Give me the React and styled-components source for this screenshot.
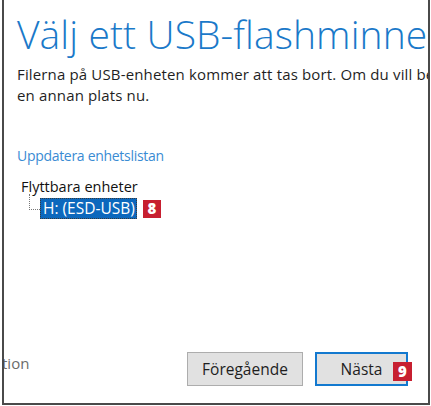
import React from "react";
import styled, { createGlobalStyle } from "styled-components";

const Global = createGlobalStyle`
  html, body { margin: 0; padding: 0; background: #ffffff; }
  body { font-family: "Open Sans", "Noto Sans", sans-serif; }
  * { box-sizing: border-box; }
`;

const Frame = styled.div`
  margin-left: 2px;
  width: 428px;
  height: 405px;
  border-left: 2px solid #4a4a4a;
  border-right: 2px solid #4a4a4a;
  border-bottom: 2px solid #4a4a4a;
  background: #ffffff;
  overflow: hidden;
  display: flex;
  flex-direction: column;
`;

const Content = styled.div`
  padding: 0 0 0 13px;
  display: flex;
  flex-direction: column;
  flex: 1;
`;

const Title = styled.h1`
  margin: 8px 0 0 0;
  font-family: "Open Sans", "Noto Sans", sans-serif;
  font-weight: 300;
  font-size: 39px;
  line-height: 52px;
  color: #1a79c9;
  white-space: nowrap;
  letter-spacing: 0.1px;
`;

const Body = styled.p`
  margin: 4px 0 0 0;
  font-size: 15px;
  line-height: 21px;
  color: #1f1f1f;
  white-space: nowrap;
  letter-spacing: 0.15px;
`;

const Link = styled.a`
  margin-top: 39px;
  font-size: 14px;
  line-height: 21px;
  color: #3a8bd3;
  text-decoration: none;
  letter-spacing: -0.3px;
  align-self: flex-start;
`;

const Tree = styled.div`
  margin: 11px 0 0 4px;
  display: flex;
  flex-direction: column;
`;

const TreeRoot = styled.div`
  font-size: 14.5px;
  line-height: 20px;
  color: #111;
  letter-spacing: 0;
`;

const TreeItem = styled.div`
  display: flex;
  align-items: center;
  gap: 6px;
  margin-top: 1px;
`;

const Connector = styled.span`
  width: 11px;
  height: 16px;
  margin-left: 8px;
  margin-right: -6px;
  align-self: flex-start;
  margin-top: -4px;
  border-left: 1px dotted #777;
  border-bottom: 1px dotted #777;
`;

const Selected = styled.span`
  display: inline-block;
  height: 21px;
  padding: 0 2px 0 3px;
  background: #0c68bd;
  outline: 1px dotted #3a3a3a;
  outline-offset: -1px;
  color: #ffffff;
  font-size: 15.5px;
  line-height: 21px;
  letter-spacing: 0;
`;

const Badge = styled.span`
  display: inline-flex;
  align-items: center;
  justify-content: center;
  width: ${(p) => p.$size}px;
  height: ${(p) => p.$size}px;
  background: #c71f30;
  color: #fff;
  font-family: "Open Sans", "Noto Sans", sans-serif;
  font-weight: 800;
  font-size: 15px;
  line-height: 1;
`;

const Footer = styled.div`
  display: flex;
  align-items: flex-start;
  margin-bottom: 17px;
`;

const Clipped = styled.span`
  margin: 1px 0 0 -2px;
  font-size: 15px;
  color: #6b6b6b;
  letter-spacing: 0;
  flex: 1;
`;

const Button = styled.button`
  height: 34px;
  width: ${(p) => p.$w}px;
  background: #e1e1e1;
  border: ${(p) => (p.$primary ? "2px solid #1379cf" : "1px solid #adadad")};
  font-family: "Open Sans", "Noto Sans", sans-serif;
  font-size: 15.5px;
  color: #1e1e1e;
  padding: 0;
  letter-spacing: 0;
`;

const ButtonGroup = styled.div`
  display: flex;
  gap: 12px;
  margin-right: 20px;
  position: relative;
`;

const FloatBadge = styled.div`
  position: absolute;
  right: -4px;
  top: 8px;
`;

export default function App() {
  return (
    <>
      <Global />
      <Frame>
        <Content>
          <Title>Välj ett USB-flashminne</Title>
          <Body>
            Filerna på USB-enheten kommer att tas bort. Om du vill be
            <br />
            en annan plats nu.
          </Body>
          <Link href="#">Uppdatera enhetslistan</Link>
          <Tree>
            <TreeRoot>Flyttbara enheter</TreeRoot>
            <TreeItem>
              <Connector />
              <Selected>H: (ESD-USB)</Selected>
              <Badge $size={18}>8</Badge>
            </TreeItem>
          </Tree>
        </Content>
        <Footer>
          <Clipped>tion</Clipped>
          <ButtonGroup>
            <Button $w={116}>Föregående</Button>
            <Button $w={93} $primary>
              Nästa
            </Button>
            <FloatBadge>
              <Badge $size={19}>9</Badge>
            </FloatBadge>
          </ButtonGroup>
        </Footer>
      </Frame>
    </>
  );
}
